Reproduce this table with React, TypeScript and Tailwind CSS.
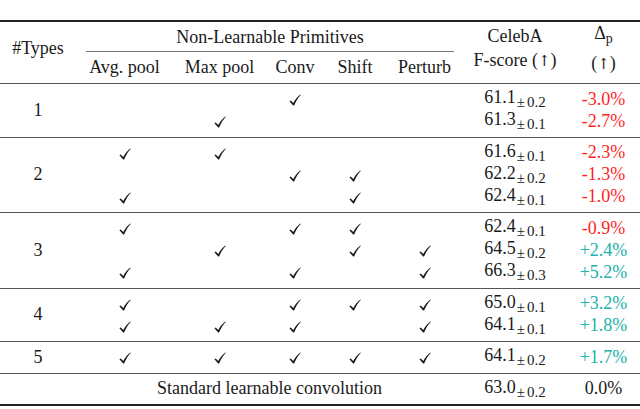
import React from 'react';

type Row = {
  checks: boolean[];
  score: string;
  std: string;
  delta: string;
};

type Group = {
  label: string;
  rows: Row[];
};

const cols = 'grid grid-cols-[76px_97px_93px_58px_62px_77px_104px_73px]';

const groups: Group[] = [
  {
    label: '1',
    rows: [
      { checks: [false, false, true, false, false], score: '61.1', std: '0.2', delta: '-3.0%' },
      { checks: [false, true, false, false, false], score: '61.3', std: '0.1', delta: '-2.7%' },
    ],
  },
  {
    label: '2',
    rows: [
      { checks: [true, true, false, false, false], score: '61.6', std: '0.1', delta: '-2.3%' },
      { checks: [false, false, true, true, false], score: '62.2', std: '0.2', delta: '-1.3%' },
      { checks: [true, false, false, true, false], score: '62.4', std: '0.1', delta: '-1.0%' },
    ],
  },
  {
    label: '3',
    rows: [
      { checks: [true, false, true, true, false], score: '62.4', std: '0.1', delta: '-0.9%' },
      { checks: [false, true, false, true, true], score: '64.5', std: '0.2', delta: '+2.4%' },
      { checks: [true, false, true, false, true], score: '66.3', std: '0.3', delta: '+5.2%' },
    ],
  },
  {
    label: '4',
    rows: [
      { checks: [true, false, true, true, true], score: '65.0', std: '0.1', delta: '+3.2%' },
      { checks: [true, true, true, false, true], score: '64.1', std: '0.1', delta: '+1.8%' },
    ],
  },
  {
    label: '5',
    rows: [{ checks: [true, true, true, true, true], score: '64.1', std: '0.2', delta: '+1.7%' }],
  },
];

const rowSpan = ['row-span-1', 'row-span-2', 'row-span-3'];

const Check = () => (
  <svg width="12" height="12" viewBox="0 0 12 12" className="mt-[2px]">
    <path
      d="M0.4 7.3 L1.7 6.5 L4.3 9.1 C6.1 5.5 8.4 2.5 11.4 0.4 L11.8 0.9 C9.2 3.4 6.9 7 5.1 11.6 L4.2 11.6 Z"
      fill="#1a1a1a"
    />
  </svg>
);

const Score = ({ score, std }: { score: string; std: string }) => (
  <span className="whitespace-nowrap">
    {score}
    <span className="ml-[1px] text-[15px] align-[-4px]">
      <span className="mr-[2px]">±</span>
      {std}
    </span>
  </span>
);

const Delta = ({ value }: { value: string }) => {
  const color = value.startsWith('-') ? 'text-[#ff1f1f]' : value.startsWith('+') ? 'text-[#20b2aa]' : 'text-[#1a1a1a]';
  return <span className={color}>{value}</span>;
};

export default function App() {
  return (
    <div className="w-[640px] h-[409px] bg-white text-[#1a1a1a] text-[18px] [font-family:'Liberation_Serif',serif] overflow-hidden pt-[20px]">
      {/* header */}
      <div className={`${cols} grid-rows-[30px_31px] border-t-2 border-[#222]`}>
        <div className="row-span-2 flex items-center justify-center pb-[9px]">#Types</div>
        <div className="col-span-5 flex items-center">
          <div className="w-full ml-[10px] mr-[9px] h-full flex items-center justify-center border-b border-[#777] pt-[1px]">
            Non-Learnable Primitives
          </div>
        </div>
        <div className="row-span-2 flex flex-col items-center justify-center leading-[24px] pb-[9px]">
          <span>CelebA</span>
          <span>
            F-score (<span className="[font-family:'DejaVu_Serif',serif] text-[15px]">↑</span>)
          </span>
        </div>
        <div className="row-span-2 flex flex-col items-center justify-center leading-[24px] pb-[9px]">
          <span>
            Δ<span className="text-[14px] align-[-4px]">p</span>
          </span>
          <span>
            (<span className="[font-family:'DejaVu_Serif',serif] text-[15px]">↑</span>)
          </span>
        </div>
        <div className="flex items-center justify-center">Avg. pool</div>
        <div className="flex items-center justify-center">Max pool</div>
        <div className="flex items-center justify-center">Conv</div>
        <div className="flex items-center justify-center">Shift</div>
        <div className="flex items-center justify-center">Perturb</div>
      </div>

      {/* groups */}
      {groups.map((g) => (
        <div key={g.label} className={`${cols} auto-rows-[22px] pt-[4px] pb-[4.5px] border-t-[1.5px] border-[#555]`}>
          <div className={`${rowSpan[g.rows.length - 1]} col-start-1 row-start-1 flex items-center justify-center`}>
            {g.label}
          </div>
          {g.rows.map((r, i) => (
            <React.Fragment key={i}>
              {r.checks.map((c, j) => (
                <div
                  key={j}
                  className="flex items-center justify-center"
                  style={{ gridRow: i + 1, gridColumn: j + 2 }}
                >
                  {c && <Check />}
                </div>
              ))}
              <div className="flex items-center justify-center" style={{ gridRow: i + 1, gridColumn: 7 }}>
                <Score score={r.score} std={r.std} />
              </div>
              <div className="flex items-center justify-center" style={{ gridRow: i + 1, gridColumn: 8 }}>
                <Delta value={r.delta} />
              </div>
            </React.Fragment>
          ))}
        </div>
      ))}

      {/* baseline */}
      <div className={`${cols} auto-rows-[22px] pt-[4px] pb-[4.5px] border-t-[1.5px] border-[#555] border-b-2 border-b-[#222]`}>
        <div className="col-start-2 col-span-5 flex items-center justify-center">Standard learnable convolution</div>
        <div className="flex items-center justify-center">
          <Score score="63.0" std="0.2" />
        </div>
        <div className="flex items-center justify-center">
          <Delta value="0.0%" />
        </div>
      </div>
    </div>
  );
}
